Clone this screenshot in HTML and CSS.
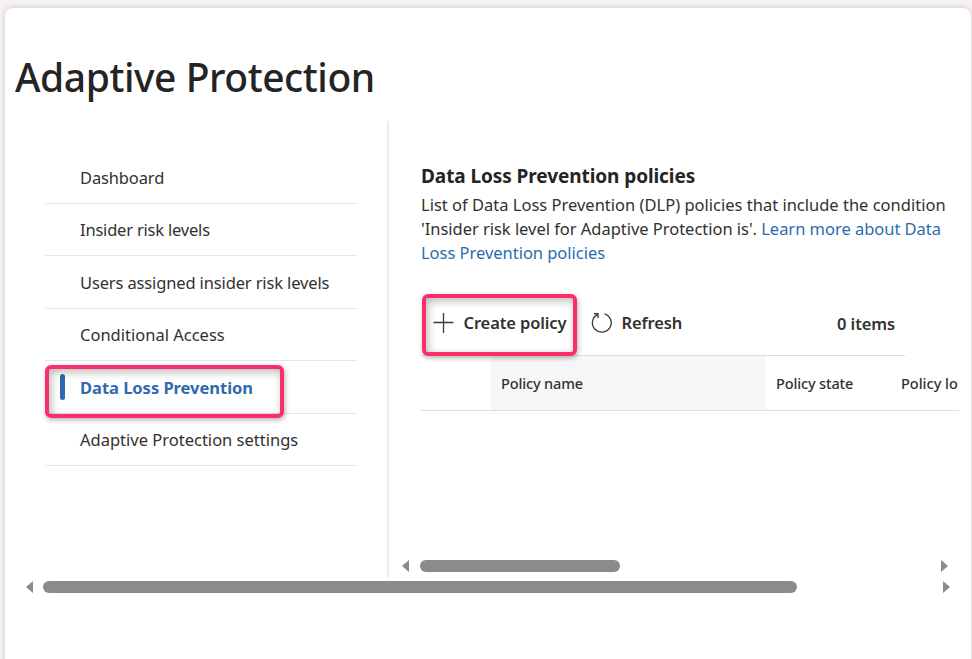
FILE: index.html
```html
<!DOCTYPE html>
<html lang="en">
<head>
<meta charset="utf-8">
<title>Adaptive Protection</title>
<link rel="stylesheet" href="styles.css">
</head>
<body>
<main class="card">
  <h1 class="title">Adaptive Protection</h1>
  <div class="columns">
    <nav class="nav">
      <a class="nav-item tight">Dashboard</a>
      <a class="nav-item tighter">Insider risk levels</a>
      <a class="nav-item tight">Users assigned insider risk levels</a>
      <a class="nav-item">Conditional Access</a>
      <a class="nav-item active">Data Loss Prevention<i class="callout callout-nav"></i></a>
      <a class="nav-item">Adaptive Protection settings</a>
    </nav>
    <section class="content">
      <h2 class="heading">Data Loss Prevention policies</h2>
      <p class="desc">List of Data Loss Prevention (DLP) policies that include the condition<br><span class="snug">'Insider risk level for Adaptive Protection is'. <a class="link">Learn more about Data</a></span><br><a class="link snug">Loss Prevention policies</a></p>
      <div class="toolbar">
        <button class="tool create"><svg class="icon" width="22" height="22" viewBox="0 0 22 22"><path d="M10.5 1v20M.5 10.5h20"/></svg><span class="label">Create policy</span><i class="callout callout-create"></i></button>
        <button class="tool refresh"><svg class="icon" width="22" height="22" viewBox="0 0 22 22"><path d="M13.5 1.8A9.4 9.4 0 1 1 6.2 2.6M2.8 1.6h4.2v4.4"/></svg><span class="label">Refresh</span></button>
        <span class="count">0 items</span>
      </div>
      <div class="table-head">
        <span class="cell check"></span>
        <span class="cell name">Policy name</span>
        <span class="cell state">Policy state</span>
        <span class="cell loc">Policy lo</span>
      </div>
      <div class="scroll inner">
        <svg class="arrow" width="7" height="12" viewBox="0 0 7 12"><path d="M7 0v12L0 6z"/></svg>
        <span class="thumb"></span>
        <svg class="arrow end" width="7" height="12" viewBox="0 0 7 12"><path d="M0 0v12l7-6z"/></svg>
      </div>
    </section>
  </div>
  <div class="scroll outer">
    <svg class="arrow" width="7" height="12" viewBox="0 0 7 12"><path d="M7 0v12L0 6z"/></svg>
    <span class="thumb"></span>
    <svg class="arrow end" width="7" height="12" viewBox="0 0 7 12"><path d="M0 0v12l7-6z"/></svg>
  </div>
</main>
</body>
</html>
```
FILE: styles.css
```css
* { box-sizing: border-box; }
html, body { margin: 0; height: 100%; }
body {
  padding: 8px 1px 0 5px;
  overflow: hidden;
  background: #f5f1f5;
  color: #323130;
  font-family: "Noto Sans", "Open Sans", sans-serif;
  font-size: 16.5px;
}
.card {
  height: 680px;
  padding-top: 39px;
  background: #fff;
  border-radius: 8px;
  box-shadow: 0 0 6px rgba(0, 0, 0, .18);
}
.title {
  margin: 0;
  padding-left: 10px;
  height: 74px;
  line-height: 60px;
  font-size: 39px;
  font-weight: 500;
  letter-spacing: -.45px;
  color: #242424;
  white-space: nowrap;
}
.columns { display: flex; height: 456px; }
.nav {
  flex: none;
  width: 384px;
  padding: 30px 30px 0 40px;
  border-right: 2px solid #ebebeb;
}
.nav-item {
  position: relative;
  display: flex;
  align-items: center;
  height: 52.5px;
  padding: 1px 0 0 35px;
  border-bottom: 1.5px solid #e6e6e6;
  white-space: nowrap;
}
.tight { letter-spacing: -.14px; }
.tighter { letter-spacing: -.2px; }
.snug { letter-spacing: -.03px; }
.nav-item.active { color: #2f6ab0; font-weight: 700; letter-spacing: -.03px; }
.nav-item.active::before {
  content: "";
  position: absolute;
  left: 15px;
  top: 13px;
  width: 5px;
  height: 26px;
  border-radius: 3px;
  background: #2f6ab0;
}
.callout {
  position: absolute;
  border: 4px solid #fc2d69;
  border-radius: 6px;
  box-shadow: 1px 2px 5px rgba(0, 0, 0, .3), inset 2px 3px 8px rgba(0, 0, 0, .28);
}
.callout-nav { left: 0; top: 4px; width: 239px; height: 53px; z-index: 1; }
.content {
  display: flex;
  flex-direction: column;
  width: 538px;
  margin-left: 32px;
}
.heading {
  margin: 0;
  padding-top: 41px;
  height: 72px;
  line-height: 28px;
  font-size: 19px;
  font-weight: 700;
  letter-spacing: -.08px;
  color: #242424;
  white-space: nowrap;
}
.desc { margin: 0; line-height: 24px; white-space: nowrap; }
.link { color: #2b6cb0; }
.toolbar {
  display: flex;
  align-items: center;
  width: 484px;
  height: 91px;
  padding: 26px 10px 0 12px;
  border-bottom: 1px solid #dedede;
  font-weight: 600;
  letter-spacing: -.12px;
}
.tool {
  display: flex;
  align-items: center;
  padding: 0;
  border: 0;
  background: none;
  color: inherit;
  font: inherit;
  letter-spacing: inherit;
  white-space: nowrap;
}
.label { margin-top: -2px; }
.create { position: relative; width: 158px; }
.callout-create { left: -11px; top: -18px; width: 155px; height: 62px; }
.icon { flex: none; margin-right: 8.5px; fill: none; stroke: #3a3a3a; stroke-width: 1.3; }
.count { margin-left: auto; }
.table-head {
  display: flex;
  height: 55px;
  overflow: hidden;
  border-bottom: 1px solid #dedede;
  font-size: 14.5px;
  font-weight: 500;
  letter-spacing: -.14px;
}
.cell { flex: none; display: flex; align-items: center; height: 54px; padding: 0 0 0 10px; white-space: nowrap; }
.check { width: 70px; }
.name { width: 275px; background: #f7f7f7; }
.state { width: 125px; }
.loc { width: 90px; letter-spacing: 0; }
.scroll { display: flex; align-items: center; height: 12px; }
.arrow { flex: none; fill: #8c8a8c; }
.end { margin-left: auto; }
.thumb { height: 12px; border-radius: 6px; background: #8c8a8c; }
.inner { width: 546px; margin: 149px 0 0 -19px; }
.inner .thumb { width: 200px; margin-left: 11px; }
.outer { width: 924px; margin: 4px 0 0 21px; }
.outer .thumb { width: 754px; margin-left: 10px; }
```
